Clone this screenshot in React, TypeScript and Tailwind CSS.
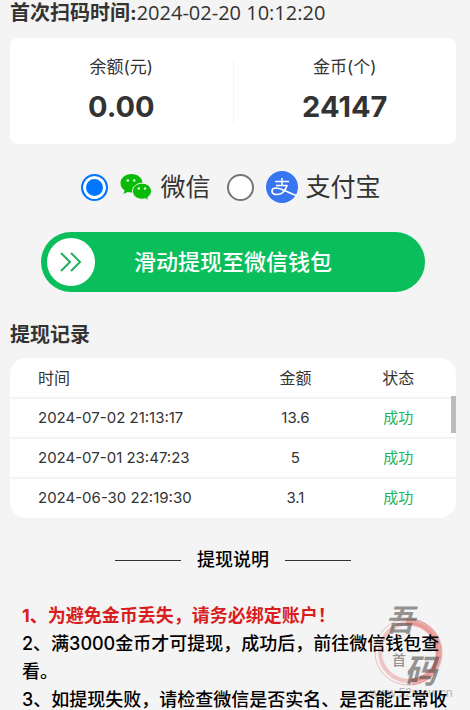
import { useState } from 'react';

interface WithdrawRecord {
  time: string;
  amount: string;
  status: string;
}

const RECORDS: WithdrawRecord[] = [
  { time: '2024-07-02 21:13:17', amount: '13.6', status: '成功' },
  { time: '2024-07-01 23:47:23', amount: '5', status: '成功' },
  { time: '2024-06-30 22:19:30', amount: '3.1', status: '成功' },
];

const NOTES = [
  { text: '1、为避免金币丢失，请务必绑定账户！', warn: true },
  { text: '2、满3000金币才可提现，成功后，前往微信钱包查看。', warn: false },
  { text: '3、如提现失败，请检查微信是否实名、是否能正常收', warn: false },
];

function WechatIcon() {
  return (
    <svg className="w-8 h-7" viewBox="0 0 32 28" aria-hidden="true">
      <path
        d="M11.5 1C5.3 1 .5 5 .5 10.2c0 3 1.6 5.5 4.1 7.2l-1.1 3.6 4.1-2.1c1.2.3 2.500.5 3.900.5 6.200 0 11-4 11-9.200S17.700 1 11.500 1Z"
        fill="#09bb07"
      />
      <path
        d="M22 10.200c-5.300 0-9.500 3.500-9.500 8s4.200 8 9.500 8c1.200 0 2.300-.2 3.300-.5l3.400 1.800-.9-3.100c2.300-1.500 3.700-3.700 3.700-6.200 0-4.500-4.200-8-9.500-8Z"
        fill="#09bb07"
        stroke="#f4f4f4"
        strokeWidth="1"
      />
      <g fill="#e8fbe8">
        <circle cx="7.800" cy="7.500" r="1.300" />
        <circle cx="14.200" cy="7.500" r="1.300" />
        <circle cx="18.800" cy="15.500" r="1.200" />
        <circle cx="25" cy="15.500" r="1.200" />
      </g>
    </svg>
  );
}

function AlipayIcon() {
  return (
    <svg className="w-8 h-8" viewBox="0 0 32 32" aria-hidden="true">
      <circle cx="16" cy="16" r="16" fill="#3875f0" />
      <g fill="none" stroke="#fff">
        <path d="M9 10.500h14M16 7v7.500M10 14.500h11.500" strokeWidth="1.500" />
        <path
          d="M21 14.500C19.500 19 16 23.500 11 23.500c-3 0-5-1.400-5-3.300 0-2 1.800-3.200 4.300-3.200 4.700 0 9 3.500 20 7.500"
          strokeWidth="1.700"
        />
      </g>
    </svg>
  );
}

function SiteSeal() {
  return (
    <svg className="w-24 h-28" viewBox="0 0 96 112" aria-hidden="true">
      <g fill="none" stroke="#d93a35">
        <circle cx="43" cy="54" r="29" strokeWidth="4" opacity=".25" />
        <circle cx="42" cy="54" r="33" strokeWidth="1" opacity=".3" />
        <path d="M40 24c17-1 32 11 33 29S61 82 46 84" strokeWidth="7" opacity=".3" />
      </g>
      <g fill="#333" opacity=".5" fontFamily="'Noto Sans CJK SC', sans-serif">
        <text x="19" y="33" fontSize="30" fontWeight="700" fontStyle="italic">吾</text>
        <text x="59" y="52" fontSize="14" opacity=".6">爱</text>
        <text x="26" y="67" fontSize="14" fontWeight="500">首</text>
        <text x="38" y="85" fontSize="33" fontWeight="700" fontStyle="italic">码</text>
      </g>
      <text x="4" y="99" fontSize="12" fill="#777" opacity=".5" fontFamily="'Liberation Sans', sans-serif">
        www.52maw.cn
      </text>
    </svg>
  );
}

function Stat({ label, value }: { label: string; value: string }) {
  return (
    <div className="flex-1 text-center">
      <div className="text-[17px] leading-6">{label}</div>
      <div className="mt-2 text-[29px] leading-10 font-bold">{value}</div>
    </div>
  );
}

export default function App() {
  const [method, setMethod] = useState('wechat');

  const methods = [
    { id: 'wechat', label: '微信', icon: <WechatIcon /> },
    { id: 'alipay', label: '支付宝', icon: <AlipayIcon /> },
  ];

  return (
    <div className="relative h-screen overflow-hidden bg-[#f4f4f4] pl-[10px] pr-[14px] text-[#333] font-[Inter,'Noto_Sans_CJK_SC',sans-serif]">
      <p className="text-xl leading-[26px]">
        <span className="font-bold">首次扫码时间:</span>
        <span className="font-['Open_Sans',sans-serif]">2024-02-20 10:12:20</span>
      </p>

      <section className="mt-3 flex items-center rounded-lg bg-white py-[17px]">
        <Stat label="余额(元)" value="0.00" />
        <div className="h-16 w-px bg-[#f4f4f4]" />
        <Stat label="金币(个)" value="24147" />
      </section>

      <div className="mt-[25px] flex h-9 items-center justify-center gap-4 pr-1">
        {methods.map((item) => (
          <label key={item.id} className="flex items-center gap-2">
            <input
              type="radio"
              name="method"
              value={item.id}
              checked={method === item.id}
              onChange={() => setMethod(item.id)}
              className="mr-1 size-[27px] appearance-none rounded-full border-2 border-[#767676] bg-white checked:border-[#0075ff] checked:bg-[#0075ff] checked:shadow-[inset_0_0_0_3px_#fff]"
            />
            {item.icon}
            <span className="text-[25px] leading-9">{item.label}</span>
          </label>
        ))}
      </div>

      <button
        type="button"
        className="relative mx-auto mt-[27px] flex h-[60px] w-[86%] items-center justify-center rounded-full bg-[#0abf5b] text-[22px] font-medium text-white"
      >
        <span className="absolute left-[6px] flex size-12 items-center justify-center rounded-full bg-white">
          <svg className="h-5 w-6" viewBox="0 0 24 20" fill="none" stroke="#21b060" strokeWidth="2" aria-hidden="true">
            <path d="m2 1 9 9-9 9M12 1l9 9-9 9" />
          </svg>
        </span>
        滑动提现至微信钱包
      </button>

      <h2 className="mt-7 text-xl leading-[30px] font-bold">提现记录</h2>

      <div className="relative mt-2 overflow-hidden rounded-2xl bg-white">
        <table className="w-full table-fixed text-base">
          <thead>
            <tr className="h-10 border-b-2 border-[#f4f4f4]">
              <th className="w-[53%] pl-7 text-left font-normal">时间</th>
              <th className="w-[22%] font-normal">金额</th>
              <th className="w-[25%] pr-1 font-normal">状态</th>
            </tr>
          </thead>
          <tbody>
            {RECORDS.map((record) => (
              <tr key={record.time} className="h-10 border-b-2 border-[#f4f4f4] text-[15px] last:border-b-0">
                <td className="pl-7">{record.time}</td>
                <td className="text-center">{record.amount}</td>
                <td className="pr-1 text-center text-[#22b35c]">{record.status}</td>
              </tr>
            ))}
          </tbody>
        </table>
        <div className="absolute right-0 top-[38px] h-[37px] w-[5px] bg-[#bbb]" />
      </div>

      <div className="mt-7 flex items-center justify-center gap-4 text-black">
        <span className="h-px w-[66px] bg-[#333]" />
        <h2 className="text-lg leading-7 font-medium">提现说明</h2>
        <span className="h-px w-[66px] bg-[#333]" />
      </div>

      <ol className="relative z-10 mt-7 pl-3 text-lg leading-7 font-medium text-black">
        {NOTES.map((note) => (
          <li key={note.text} className={note.warn ? 'font-bold text-[#d81e1e]' : ''}>
            {note.text}
          </li>
        ))}
      </ol>

      <div className="pointer-events-none absolute bottom-0 right-2">
        <SiteSeal />
      </div>
    </div>
  );
}
